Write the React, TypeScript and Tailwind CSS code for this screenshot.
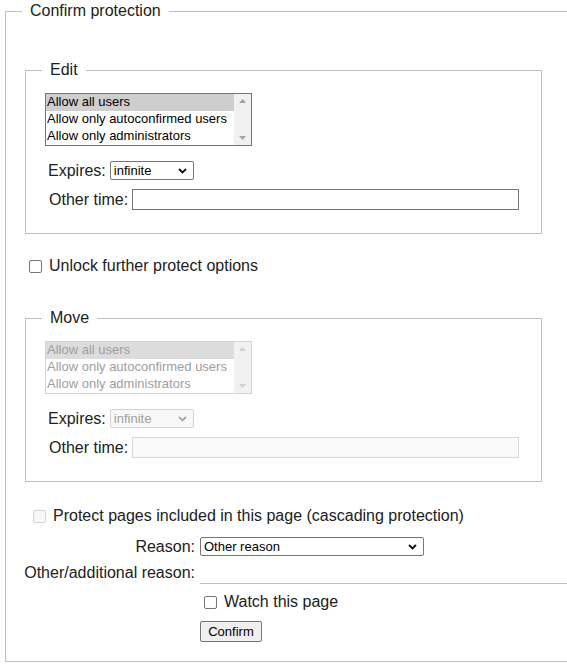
import React from 'react';

const options = ['Allow all users', 'Allow only autoconfirmed users', 'Allow only administrators'];

function Chevron({ disabled }: { disabled?: boolean }) {
  return (
    <svg width="9" height="6" viewBox="0 0 9 6" className="shrink-0">
      <path
        d="M1 1l3.5 3.5L8 1"
        fill="none"
        stroke={disabled ? '#a8a8a8' : '#101010'}
        strokeWidth="1.8"
      />
    </svg>
  );
}

function ListBox({ disabled }: { disabled?: boolean }) {
  const arrow = disabled ? '#cfcfcf' : '#a3a3a3';
  return (
    <div
      className={`ml-[3px] flex h-[53px] w-[207px] border ${
        disabled ? 'border-[#d3d3d3] text-[#9e9e9e]' : 'border-[#767676] text-black'
      }`}
    >
      <div className="flex-1 text-[13px] leading-[16px]">
        {options.map((o, i) => (
          <div
            key={o}
            className={`h-[17px] whitespace-nowrap pl-px ${
              i === 0 ? (disabled ? 'bg-[#dcdcdc]' : 'bg-[#cecece]') : ''
            }`}
          >
            {o}
          </div>
        ))}
      </div>
      <div className="flex w-[17px] flex-col items-center justify-between bg-[#f1f1f1] py-[5px]">
        <svg width="7" height="4" viewBox="0 0 7 4">
          <path d="M0 4L3.5 0L7 4Z" fill={arrow} />
        </svg>
        <svg width="7" height="4" viewBox="0 0 7 4">
          <path d="M0 0L7 0L3.5 4Z" fill={arrow} />
        </svg>
      </div>
    </div>
  );
}

function Level({ title, disabled }: { title: string; disabled?: boolean }) {
  return (
    <fieldset className="ml-[3px] w-[517px] border border-[#c0c0c0] px-4 pb-[23px] pt-[13px]">
      <legend className="px-2 text-[16px] leading-[20px]">{title}</legend>
      <ListBox disabled={disabled} />
      <div className="mt-[15px] flex h-[19px] items-center">
        <span className="ml-[6px] text-[16px]">Expires:</span>
        <div
          className={`ml-[4px] flex h-[19px] w-[84px] items-center justify-between rounded-[2px] border pl-[3px] pr-[6px] text-[13px] ${
            disabled
              ? 'border-[#d3d3d3] bg-[#f8f8f8] text-[#9e9e9e]'
              : 'border-[#767676] bg-white text-black'
          }`}
        >
          <span>infinite</span>
          <Chevron disabled={disabled} />
        </div>
      </div>
      <div className="mt-[9px] flex h-[21px] items-center">
        <span className="ml-[7px] text-[16px]">Other time:</span>
        <div
          className={`ml-[4px] h-[21px] w-[387px] border ${
            disabled ? 'border-[#d8d8d8] bg-[#fafafa]' : 'border-[#767676] bg-white'
          }`}
        />
      </div>
    </fieldset>
  );
}

function Box({ disabled }: { disabled?: boolean }) {
  return (
    <span
      className={`block h-[13px] w-[13px] shrink-0 rounded-[2px] border ${
        disabled ? 'border-[#d3d3d3] bg-[#f8f8f8]' : 'border-[#767676] bg-white'
      }`}
    />
  );
}

export default function App() {
  return (
    <div className="h-[670px] w-[567px] overflow-hidden bg-white font-['Arial','Liberation_Sans',sans-serif] text-[#202122]">
      <fieldset className="ml-[5px] mt-px w-[640px] border border-[#c0c0c0] px-4 pb-[18px]">
        <legend className="px-2 text-[16px] leading-[20px]">Confirm protection</legend>

        <div className="mt-[39px]">
          <Level title="Edit" />
        </div>

        <div className="mt-[22px] flex h-5 items-center gap-[7px] pl-[7px] text-[16px]">
          <Box />
          <span>Unlock further protect options</span>
        </div>

        <div className="mt-8">
          <Level title="Move" disabled />
        </div>

        <div className="mt-6 flex h-5 items-center gap-[7px] pl-[11px] text-[16px]">
          <Box disabled />
          <span>Protect pages included in this page (cascading protection)</span>
        </div>

        <div className="mt-[11px] flex h-[19px] items-center">
          <span className="w-[173px] text-right text-[16px]">Reason:</span>
          <div className="ml-[5px] flex h-[19px] w-[224px] items-center justify-between rounded-[2px] border border-[#767676] bg-white pl-[3px] pr-[6px] text-[13px] text-black">
            <span>Other reason</span>
            <Chevron />
          </div>
        </div>

        <div className="mt-[6px] flex h-[22px] items-center">
          <span className="w-[173px] text-right text-[16px]">Other/additional reason:</span>
          <div className="ml-[5px] h-[22px] w-[420px] border-b border-[#c0c0c0]" />
        </div>

        <div className="mt-2 flex h-5 items-center gap-[7px] pl-[182px] text-[16px]">
          <Box />
          <span>Watch this page</span>
        </div>

        <div className="mt-[7px] pl-[178px]">
          <button className="h-[21px] w-[62px] rounded-[2px] border border-[#767676] bg-[#efefef] text-[13px] text-black">
            Confirm
          </button>
        </div>
      </fieldset>
    </div>
  );
}
